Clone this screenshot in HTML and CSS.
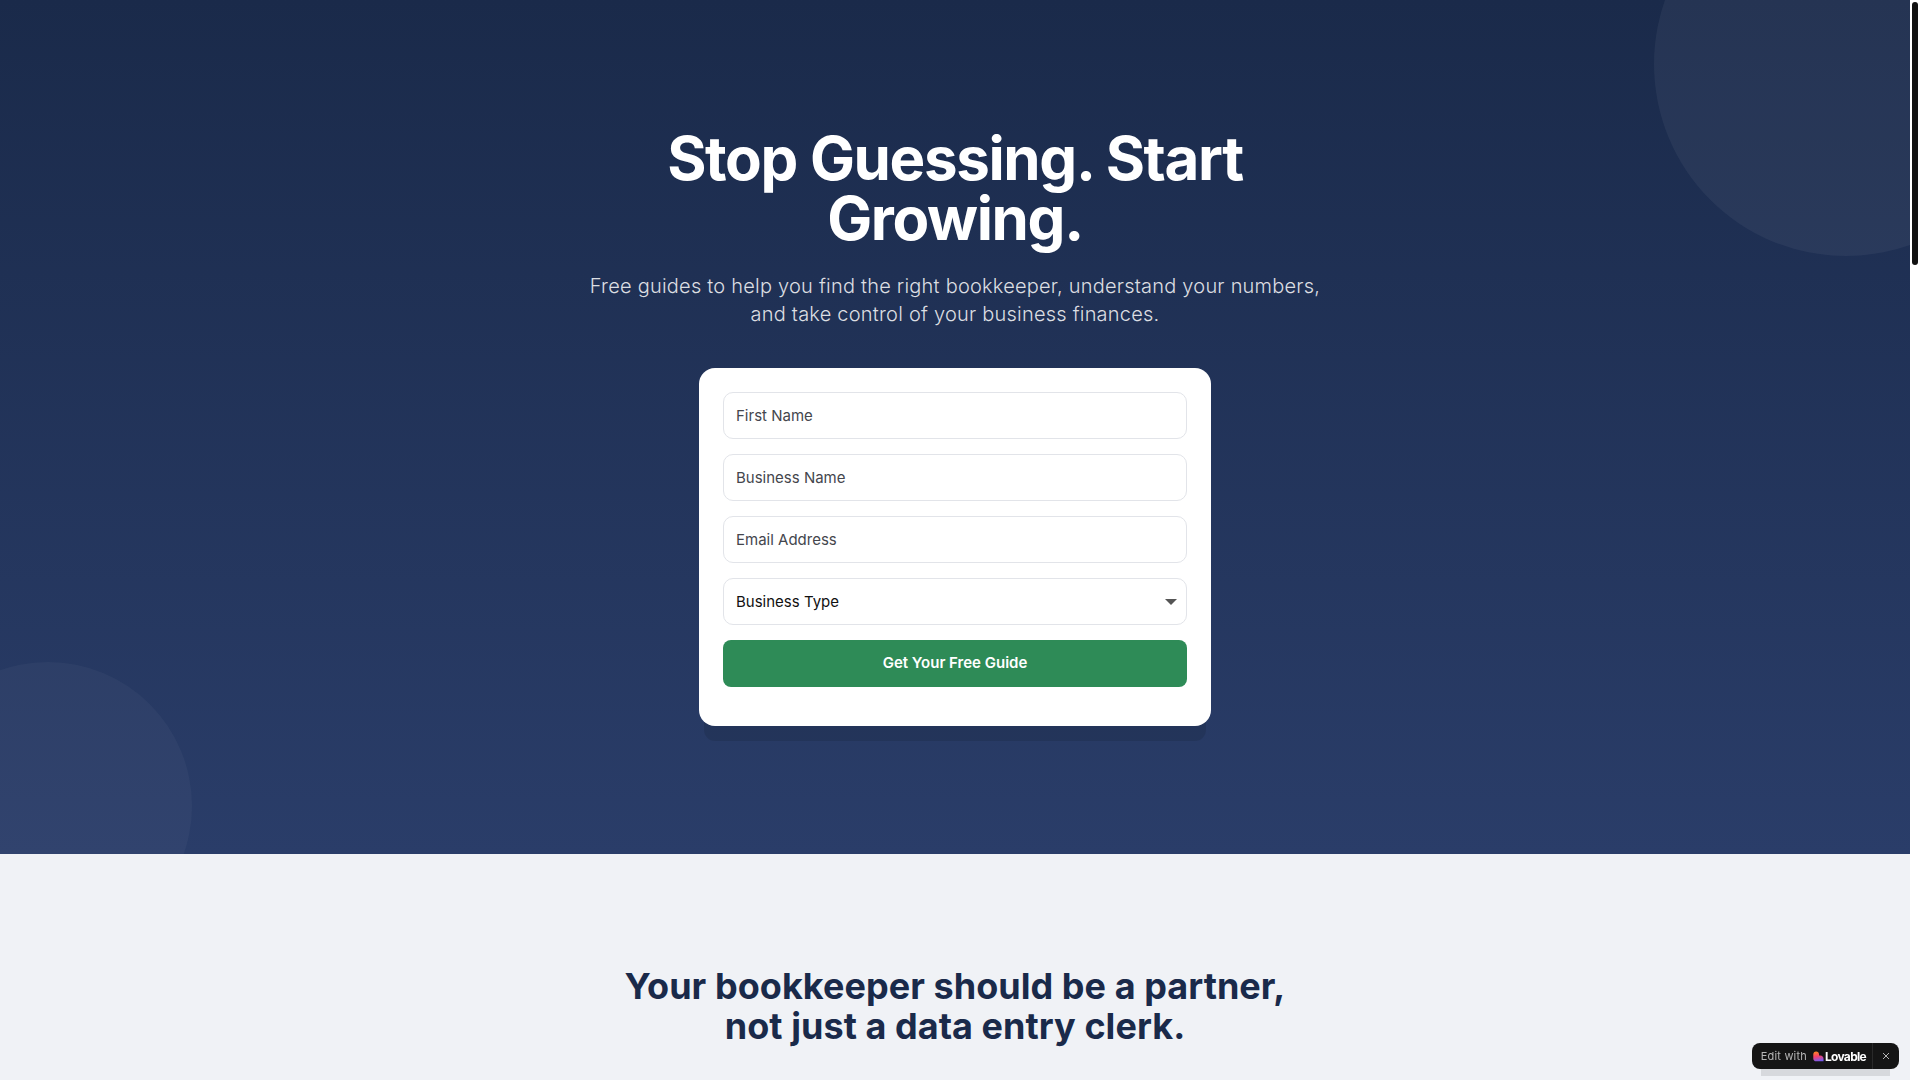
FILE: index.html
```html
<!DOCTYPE html>
<html>
<head>
    <title>Stop Guessing. Start Growing.</title>
    <link rel="stylesheet" href="styles.css">
</head>
<body>
    <div class="page">
        <section class="hero">
            <div class="circle circle-top"></div>
            <div class="circle circle-bottom"></div>
            <div class="hero-inner">
                <h1>Stop Guessing. Start Growing.</h1>
                <p>Free guides to help you find the right bookkeeper, understand your numbers, and take control of your business finances.</p>
                <form class="card">
                    <input type="text" placeholder="First Name">
                    <input type="text" placeholder="Business Name">
                    <input type="email" placeholder="Email Address">
                    <select>
                        <option>Business Type</option>
                    </select>
                    <button type="button">Get Your Free Guide</button>
                </form>
            </div>
        </section>
        <section class="partner">
            <h2>Your bookkeeper should be a partner,<br>not just a data entry clerk.</h2>
        </section>
    </div>

    <div class="scrollbar"><div class="thumb"></div></div>

    <div class="badge">
        <a class="badge-link">
            <span class="badge-edit">Edit with</span>
            <svg class="badge-logo" width="11" height="11" viewBox="0 0 12 12">
                <defs>
                    <linearGradient id="lovableGradient" x1="0.2" y1="0" x2="0.4" y2="1">
                        <stop offset="0" stop-color="#ff8a1f"/>
                        <stop offset="0.5" stop-color="#f5406a"/>
                        <stop offset="1" stop-color="#7a5cf0"/>
                    </linearGradient>
                </defs>
                <path d="M3.4 0.5C5.3 0.5 6.6 1.9 6.6 3.7V5H8C10.1 5 11.5 6.5 11.5 8.6V11.3H3.4C1.6 11.3 0.3 10 0.3 8.2V3.7C0.3 1.9 1.6 0.5 3.4 0.5Z" fill="url(#lovableGradient)"/>
            </svg>
            <span class="badge-name">Lovable</span>
        </a>
        <button type="button" class="badge-close">
            <svg width="8" height="8" viewBox="0 0 8 8"><path d="M1 1L7 7M7 1L1 7" stroke="#b5b5b5" stroke-width="1" fill="none"/></svg>
        </button>
    </div>
</body>
</html>
```

FILE: styles.css
```css
html, body {
    margin: 0;
    height: 100%;
    overflow: hidden;
}
body {
    display: flex;
    font-family: Inter, 'Noto Sans', sans-serif;
    background-color: white;
}
.page {
    flex: 1;
    height: 1080px;
    overflow: hidden;
}
.scrollbar {
    width: 10px;
    flex: none;
    padding: 2px;
    box-sizing: border-box;
}
.thumb {
    height: 263px;
    background-color: #111;
    border-radius: 3px;
}
.hero {
    position: relative;
    overflow: hidden;
    padding: 128px 0;
    background: linear-gradient(180deg, #1a2a4a, #2a3d69);
}
.circle {
    position: absolute;
    border-radius: 50%;
}
.circle-top {
    width: 384px;
    height: 384px;
    top: -128px;
    right: -128px;
    background-color: rgba(255,255,255,0.05);
}
.circle-bottom {
    width: 288px;
    height: 288px;
    bottom: -96px;
    left: -96px;
    background-color: rgba(255,255,255,0.035);
}
.hero-inner {
    position: relative;
    max-width: 768px;
    margin: 0 auto;
    text-align: center;
}
h1 {
    margin: 0 0 24px;
    font-size: 60px;
    line-height: 60px;
    font-weight: 700;
    letter-spacing: -1.35px;
    color: white;
}
.hero-inner p {
    margin: 0 0 40px;
    font-size: 20px;
    line-height: 28px;
    font-weight: 300;
    letter-spacing: 0.22px;
    color: rgba(255,255,255,0.85);
}
.card {
    display: flex;
    flex-direction: column;
    gap: 15px;
    width: 512px;
    height: 358px;
    margin: 0 auto;
    padding: 24px;
    box-sizing: border-box;
    background-color: white;
    border-radius: 16px;
    box-shadow: 0 20px 0 -5px rgba(0,0,0,0.1);
}
input, select {
    height: 47px;
    width: 100%;
    padding: 0 12px;
    box-sizing: border-box;
    border: 1px solid #e2e4e9;
    border-radius: 10px;
    background-color: white;
    font-family: inherit;
    font-size: 15px;
}
input::placeholder {
    color: #44464d;
    opacity: 1;
}
select {
    appearance: none;
    color: #111;
    background-image: url("data:image/svg+xml,%3Csvg xmlns='http://www.w3.org/2000/svg' width='12' height='6'%3E%3Cpath d='M0 0H12L6 6Z' fill='%23555'/%3E%3C/svg%3E");
    background-repeat: no-repeat;
    background-position: right 9px center;
}
button {
    border: none;
    cursor: pointer;
    font-family: inherit;
}
.card button {
    height: 47px;
    flex: none;
    padding: 0 0 2px;
    background-color: #2e8b57;
    color: white;
    font-size: 15px;
    font-weight: 600;
    border-radius: 8px;
}
.partner {
    padding-top: 112px;
    background-color: #f0f2f6;
    height: 226px;
    text-align: center;
}
h2 {
    margin: 0;
    font-size: 36px;
    line-height: 40px;
    font-weight: 700;
    letter-spacing: 0.05px;
    color: #1a2a4a;
}
.badge {
    position: fixed;
    right: 21px;
    bottom: 11px;
    display: flex;
    align-items: center;
    height: 26px;
    background-color: #151515;
    border-radius: 8px;
    box-shadow: 0 16px 0 -9px rgba(0,0,0,0.1);
}
.badge-link {
    display: flex;
    align-items: center;
    height: 100%;
    padding: 0 6px 0 9px;
    border-right: 1px solid #2a2a2a;
}
.badge-edit {
    font-size: 11px;
    letter-spacing: 0.2px;
    color: #b5b5b5;
    margin-right: 6px;
}
.badge-logo {
    margin-right: 1px;
}
.badge-name {
    font-size: 12px;
    font-weight: 700;
    letter-spacing: -0.7px;
    color: white;
}
.badge-close {
    display: flex;
    align-items: center;
    justify-content: center;
    width: 26px;
    height: 100%;
    padding: 0;
    background: none;
}
```
